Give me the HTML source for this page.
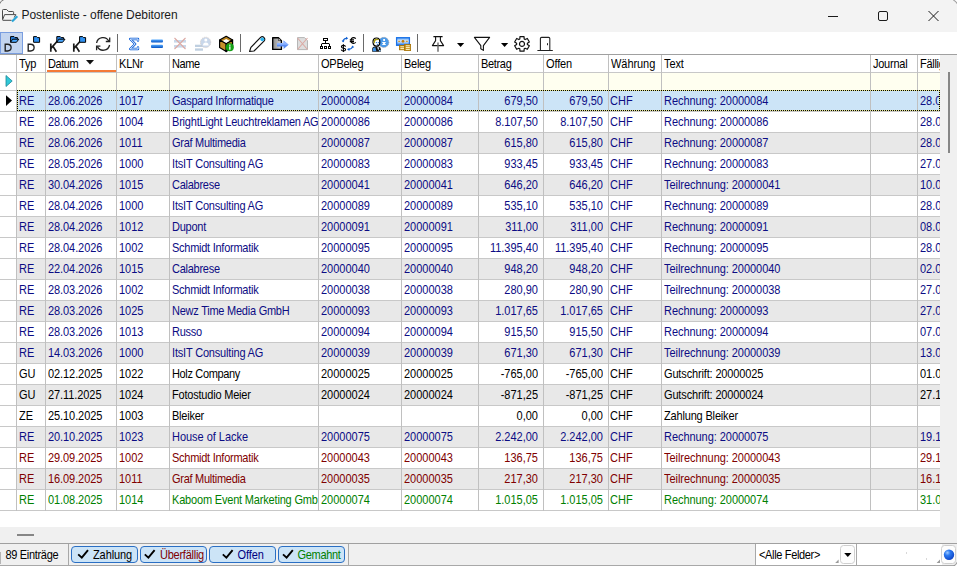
<!DOCTYPE html>
<html><head><meta charset="utf-8"><title>Postenliste - offene Debitoren</title>
<style>
*{box-sizing:border-box;margin:0;padding:0}
html,body{width:957px;height:566px;overflow:hidden;background:#f0f0f0}
body{font-family:"Liberation Sans",sans-serif;font-size:11px;color:#000;position:relative}
.abs{position:absolute}
#title{position:absolute;left:0;top:0;width:957px;height:32px;background:#f3f3f3}
#title .t{position:absolute;left:21.5px;top:7.5px;font-size:12px;color:#1b1b1b;letter-spacing:-0.06px;white-space:nowrap}
#tb{position:absolute;left:0;top:32px;width:957px;height:22px;background:#fff}
#grid{position:absolute;left:0;top:0;width:940px;height:527px;overflow:hidden}
#gridbg{position:absolute;left:0;top:54px;width:940px;height:473px;background:#fff}
#topline{position:absolute;left:0;top:54px;width:957px;height:1px;background:#a0a0a0}
#filter{position:absolute;left:17px;top:73px;width:923px;height:17px;background:#fffff0}
.row{position:absolute;left:17px;width:923px;height:20px}
.row .c{top:0;height:20px;line-height:20px;margin-left:-17px}
.row.alt{background:#e8e8e8}.row.wh{background:#fff}.row.sel{background:#cce4f7}
.c{position:absolute;white-space:nowrap;overflow:hidden;padding-left:2px}
.hdr .c{top:55px;height:17px;line-height:18px;color:#000;text-align:left;padding-left:2px}
.c-num{text-align:right;padding-right:5px;padding-left:0}
.c-w{padding-left:1px}.hdr .c-w{padding-left:2px}.c-name{letter-spacing:-0.24px}.c-dat{letter-spacing:-0.08px}.c-text{letter-spacing:-0.05px}
.t-b{color:#0c0c84}.t-k{color:#000}.t-r{color:#800000}.t-g{color:#008000}
.vl{position:absolute;top:55px;width:1px;height:456px;background:#c0c0c0}
.hl{position:absolute;left:0;width:940px;height:1px;background:#c8c8c8}
#focus{position:absolute;left:17px;top:90px;width:923px;height:21px;border:1px dotted #000;pointer-events:none}
#focus0{position:absolute;left:17px;top:90px;width:923px;height:21px;border:1px solid #e6e68a}
#vsb{position:absolute;left:940px;top:55px;width:17px;height:472px;background:#f0f0f0}
#vthumb{position:absolute;left:948px;top:72px;width:2px;height:81px;background:#868686}
#hthumb{position:absolute;left:17px;top:534px;width:17px;height:2px;background:#868686}
#status{position:absolute;left:0;top:543px;width:957px;height:23px;background:#f0f0f0;border-top:1px solid #a0a0a0}
.btn{position:absolute;top:546px;height:17px;width:67px;border:1px solid #2a6fc4;border-radius:4px;background:#cce4f7;line-height:15px;text-align:center;white-space:nowrap}
.bt{top:548px;white-space:nowrap;letter-spacing:-0.2px}
.st{transform:scaleY(1.125);transform-origin:0 2px;white-space:nowrap}
.s{display:inline-block;transform:scaleY(1.125);transform-origin:0 13.8px;line-height:20px;vertical-align:top}
.hdr .s{line-height:18px;transform-origin:0 12.8px}
</style></head><body>
<div id="title">
<div class="t">Postenliste - offene Debitoren</div>
</div>
<div id="tb"></div>
<div id="gridbg"></div>
<div id="grid">
<div id="filter"></div>
<div class="hdr"><div class="c c-typ " style="left:17px;width:28px"><span class="s"><span style="letter-spacing:-0.14px">Typ</span></span></div><div class="c c-dat " style="left:46px;width:70px"><span class="s"><span style="letter-spacing:-0.44px">Datum</span></span></div><div class="c c-kl " style="left:117px;width:52px"><span class="s"><span style="letter-spacing:-0.19px">KLNr</span></span></div><div class="c c-name " style="left:170px;width:148px"><span class="s"><span style="letter-spacing:-0.43px">Name</span></span></div><div class="c c-op " style="left:319px;width:82px"><span class="s"><span style="letter-spacing:-0.25px">OPBeleg</span></span></div><div class="c c-bel " style="left:402px;width:76px"><span class="s"><span style="letter-spacing:-0.27px">Beleg</span></span></div><div class="c c-num " style="left:479px;width:64px"><span class="s"><span style="letter-spacing:-0.33px">Betrag</span></span></div><div class="c c-num " style="left:544px;width:64px"><span class="s"><span style="letter-spacing:-0.14px">Offen</span></span></div><div class="c c-w " style="left:609px;width:52px"><span class="s"><span style="letter-spacing:-0.06px">Währung</span></span></div><div class="c c-text " style="left:662px;width:208px"><span class="s"><span style="letter-spacing:-0.12px">Text</span></span></div><div class="c c-j " style="left:871px;width:46px"><span class="s"><span style="letter-spacing:-0.25px">Journal</span></span></div><div class="c c-f " style="left:918px;width:22px"><span class="s"><span style="letter-spacing:-0.3px">Fällig</span></span></div></div>
<div class="row sel t-b" style="top:91px"><div class="c c-typ " style="left:17px;width:28px"><span class="s">RE</span></div><div class="c c-dat " style="left:46px;width:70px"><span class="s">28.06.2026</span></div><div class="c c-kl " style="left:117px;width:52px"><span class="s">1017</span></div><div class="c c-name " style="left:170px;width:148px"><span class="s"><span style="letter-spacing:-0.24px">Gaspard Informatique</span></span></div><div class="c c-op " style="left:319px;width:82px"><span class="s">20000084</span></div><div class="c c-bel " style="left:402px;width:76px"><span class="s">20000084</span></div><div class="c c-num " style="left:479px;width:64px"><span class="s">679,50</span></div><div class="c c-num " style="left:544px;width:64px"><span class="s">679,50</span></div><div class="c c-w " style="left:609px;width:52px"><span class="s">CHF</span></div><div class="c c-text " style="left:662px;width:208px"><span class="s">Rechnung: 20000084</span></div><div class="c c-j " style="left:871px;width:46px"></div><div class="c c-f " style="left:918px;width:22px"><span class="s">28.0</span></div></div>
<div class="row wh t-b" style="top:112px"><div class="c c-typ " style="left:17px;width:28px"><span class="s">RE</span></div><div class="c c-dat " style="left:46px;width:70px"><span class="s">28.06.2026</span></div><div class="c c-kl " style="left:117px;width:52px"><span class="s">1004</span></div><div class="c c-name " style="left:170px;width:148px"><span class="s"><span style="letter-spacing:-0.2px">BrightLight Leuchtreklamen AG</span></span></div><div class="c c-op " style="left:319px;width:82px"><span class="s">20000086</span></div><div class="c c-bel " style="left:402px;width:76px"><span class="s">20000086</span></div><div class="c c-num " style="left:479px;width:64px"><span class="s">8.107,50</span></div><div class="c c-num " style="left:544px;width:64px"><span class="s">8.107,50</span></div><div class="c c-w " style="left:609px;width:52px"><span class="s">CHF</span></div><div class="c c-text " style="left:662px;width:208px"><span class="s">Rechnung: 20000086</span></div><div class="c c-j " style="left:871px;width:46px"></div><div class="c c-f " style="left:918px;width:22px"><span class="s">28.0</span></div></div>
<div class="row alt t-b" style="top:133px"><div class="c c-typ " style="left:17px;width:28px"><span class="s">RE</span></div><div class="c c-dat " style="left:46px;width:70px"><span class="s">28.06.2026</span></div><div class="c c-kl " style="left:117px;width:52px"><span class="s">1011</span></div><div class="c c-name " style="left:170px;width:148px"><span class="s"><span style="letter-spacing:-0.27px">Graf Multimedia</span></span></div><div class="c c-op " style="left:319px;width:82px"><span class="s">20000087</span></div><div class="c c-bel " style="left:402px;width:76px"><span class="s">20000087</span></div><div class="c c-num " style="left:479px;width:64px"><span class="s">615,80</span></div><div class="c c-num " style="left:544px;width:64px"><span class="s">615,80</span></div><div class="c c-w " style="left:609px;width:52px"><span class="s">CHF</span></div><div class="c c-text " style="left:662px;width:208px"><span class="s">Rechnung: 20000087</span></div><div class="c c-j " style="left:871px;width:46px"></div><div class="c c-f " style="left:918px;width:22px"><span class="s">28.0</span></div></div>
<div class="row wh t-b" style="top:154px"><div class="c c-typ " style="left:17px;width:28px"><span class="s">RE</span></div><div class="c c-dat " style="left:46px;width:70px"><span class="s">28.05.2026</span></div><div class="c c-kl " style="left:117px;width:52px"><span class="s">1000</span></div><div class="c c-name " style="left:170px;width:148px"><span class="s"><span style="letter-spacing:-0.18px">ItsIT Consulting AG</span></span></div><div class="c c-op " style="left:319px;width:82px"><span class="s">20000083</span></div><div class="c c-bel " style="left:402px;width:76px"><span class="s">20000083</span></div><div class="c c-num " style="left:479px;width:64px"><span class="s">933,45</span></div><div class="c c-num " style="left:544px;width:64px"><span class="s">933,45</span></div><div class="c c-w " style="left:609px;width:52px"><span class="s">CHF</span></div><div class="c c-text " style="left:662px;width:208px"><span class="s">Rechnung: 20000083</span></div><div class="c c-j " style="left:871px;width:46px"></div><div class="c c-f " style="left:918px;width:22px"><span class="s">27.0</span></div></div>
<div class="row alt t-b" style="top:175px"><div class="c c-typ " style="left:17px;width:28px"><span class="s">RE</span></div><div class="c c-dat " style="left:46px;width:70px"><span class="s">30.04.2026</span></div><div class="c c-kl " style="left:117px;width:52px"><span class="s">1015</span></div><div class="c c-name " style="left:170px;width:148px"><span class="s"><span style="letter-spacing:-0.26px">Calabrese</span></span></div><div class="c c-op " style="left:319px;width:82px"><span class="s">20000041</span></div><div class="c c-bel " style="left:402px;width:76px"><span class="s">20000041</span></div><div class="c c-num " style="left:479px;width:64px"><span class="s">646,20</span></div><div class="c c-num " style="left:544px;width:64px"><span class="s">646,20</span></div><div class="c c-w " style="left:609px;width:52px"><span class="s">CHF</span></div><div class="c c-text " style="left:662px;width:208px"><span class="s">Teilrechnung: 20000041</span></div><div class="c c-j " style="left:871px;width:46px"></div><div class="c c-f " style="left:918px;width:22px"><span class="s">10.0</span></div></div>
<div class="row wh t-b" style="top:196px"><div class="c c-typ " style="left:17px;width:28px"><span class="s">RE</span></div><div class="c c-dat " style="left:46px;width:70px"><span class="s">28.04.2026</span></div><div class="c c-kl " style="left:117px;width:52px"><span class="s">1000</span></div><div class="c c-name " style="left:170px;width:148px"><span class="s"><span style="letter-spacing:-0.18px">ItsIT Consulting AG</span></span></div><div class="c c-op " style="left:319px;width:82px"><span class="s">20000089</span></div><div class="c c-bel " style="left:402px;width:76px"><span class="s">20000089</span></div><div class="c c-num " style="left:479px;width:64px"><span class="s">535,10</span></div><div class="c c-num " style="left:544px;width:64px"><span class="s">535,10</span></div><div class="c c-w " style="left:609px;width:52px"><span class="s">CHF</span></div><div class="c c-text " style="left:662px;width:208px"><span class="s">Rechnung: 20000089</span></div><div class="c c-j " style="left:871px;width:46px"></div><div class="c c-f " style="left:918px;width:22px"><span class="s">28.0</span></div></div>
<div class="row alt t-b" style="top:217px"><div class="c c-typ " style="left:17px;width:28px"><span class="s">RE</span></div><div class="c c-dat " style="left:46px;width:70px"><span class="s">28.04.2026</span></div><div class="c c-kl " style="left:117px;width:52px"><span class="s">1012</span></div><div class="c c-name " style="left:170px;width:148px"><span class="s">Dupont</span></div><div class="c c-op " style="left:319px;width:82px"><span class="s">20000091</span></div><div class="c c-bel " style="left:402px;width:76px"><span class="s">20000091</span></div><div class="c c-num " style="left:479px;width:64px"><span class="s">311,00</span></div><div class="c c-num " style="left:544px;width:64px"><span class="s">311,00</span></div><div class="c c-w " style="left:609px;width:52px"><span class="s">CHF</span></div><div class="c c-text " style="left:662px;width:208px"><span class="s">Rechnung: 20000091</span></div><div class="c c-j " style="left:871px;width:46px"></div><div class="c c-f " style="left:918px;width:22px"><span class="s">08.0</span></div></div>
<div class="row wh t-b" style="top:238px"><div class="c c-typ " style="left:17px;width:28px"><span class="s">RE</span></div><div class="c c-dat " style="left:46px;width:70px"><span class="s">28.04.2026</span></div><div class="c c-kl " style="left:117px;width:52px"><span class="s">1002</span></div><div class="c c-name " style="left:170px;width:148px"><span class="s"><span style="letter-spacing:-0.26px">Schmidt Informatik</span></span></div><div class="c c-op " style="left:319px;width:82px"><span class="s">20000095</span></div><div class="c c-bel " style="left:402px;width:76px"><span class="s">20000095</span></div><div class="c c-num " style="left:479px;width:64px"><span class="s">11.395,40</span></div><div class="c c-num " style="left:544px;width:64px"><span class="s">11.395,40</span></div><div class="c c-w " style="left:609px;width:52px"><span class="s">CHF</span></div><div class="c c-text " style="left:662px;width:208px"><span class="s">Rechnung: 20000095</span></div><div class="c c-j " style="left:871px;width:46px"></div><div class="c c-f " style="left:918px;width:22px"><span class="s">28.0</span></div></div>
<div class="row alt t-b" style="top:259px"><div class="c c-typ " style="left:17px;width:28px"><span class="s">RE</span></div><div class="c c-dat " style="left:46px;width:70px"><span class="s">22.04.2026</span></div><div class="c c-kl " style="left:117px;width:52px"><span class="s">1015</span></div><div class="c c-name " style="left:170px;width:148px"><span class="s"><span style="letter-spacing:-0.26px">Calabrese</span></span></div><div class="c c-op " style="left:319px;width:82px"><span class="s">20000040</span></div><div class="c c-bel " style="left:402px;width:76px"><span class="s">20000040</span></div><div class="c c-num " style="left:479px;width:64px"><span class="s">948,20</span></div><div class="c c-num " style="left:544px;width:64px"><span class="s">948,20</span></div><div class="c c-w " style="left:609px;width:52px"><span class="s">CHF</span></div><div class="c c-text " style="left:662px;width:208px"><span class="s">Teilrechnung: 20000040</span></div><div class="c c-j " style="left:871px;width:46px"></div><div class="c c-f " style="left:918px;width:22px"><span class="s">02.0</span></div></div>
<div class="row wh t-b" style="top:280px"><div class="c c-typ " style="left:17px;width:28px"><span class="s">RE</span></div><div class="c c-dat " style="left:46px;width:70px"><span class="s">28.03.2026</span></div><div class="c c-kl " style="left:117px;width:52px"><span class="s">1002</span></div><div class="c c-name " style="left:170px;width:148px"><span class="s"><span style="letter-spacing:-0.26px">Schmidt Informatik</span></span></div><div class="c c-op " style="left:319px;width:82px"><span class="s">20000038</span></div><div class="c c-bel " style="left:402px;width:76px"><span class="s">20000038</span></div><div class="c c-num " style="left:479px;width:64px"><span class="s">280,90</span></div><div class="c c-num " style="left:544px;width:64px"><span class="s">280,90</span></div><div class="c c-w " style="left:609px;width:52px"><span class="s">CHF</span></div><div class="c c-text " style="left:662px;width:208px"><span class="s">Teilrechnung: 20000038</span></div><div class="c c-j " style="left:871px;width:46px"></div><div class="c c-f " style="left:918px;width:22px"><span class="s">27.0</span></div></div>
<div class="row alt t-b" style="top:301px"><div class="c c-typ " style="left:17px;width:28px"><span class="s">RE</span></div><div class="c c-dat " style="left:46px;width:70px"><span class="s">28.03.2026</span></div><div class="c c-kl " style="left:117px;width:52px"><span class="s">1025</span></div><div class="c c-name " style="left:170px;width:148px"><span class="s">Newz Time Media GmbH</span></div><div class="c c-op " style="left:319px;width:82px"><span class="s">20000093</span></div><div class="c c-bel " style="left:402px;width:76px"><span class="s">20000093</span></div><div class="c c-num " style="left:479px;width:64px"><span class="s">1.017,65</span></div><div class="c c-num " style="left:544px;width:64px"><span class="s">1.017,65</span></div><div class="c c-w " style="left:609px;width:52px"><span class="s">CHF</span></div><div class="c c-text " style="left:662px;width:208px"><span class="s">Rechnung: 20000093</span></div><div class="c c-j " style="left:871px;width:46px"></div><div class="c c-f " style="left:918px;width:22px"><span class="s">27.0</span></div></div>
<div class="row wh t-b" style="top:322px"><div class="c c-typ " style="left:17px;width:28px"><span class="s">RE</span></div><div class="c c-dat " style="left:46px;width:70px"><span class="s">28.03.2026</span></div><div class="c c-kl " style="left:117px;width:52px"><span class="s">1013</span></div><div class="c c-name " style="left:170px;width:148px"><span class="s">Russo</span></div><div class="c c-op " style="left:319px;width:82px"><span class="s">20000094</span></div><div class="c c-bel " style="left:402px;width:76px"><span class="s">20000094</span></div><div class="c c-num " style="left:479px;width:64px"><span class="s">915,50</span></div><div class="c c-num " style="left:544px;width:64px"><span class="s">915,50</span></div><div class="c c-w " style="left:609px;width:52px"><span class="s">CHF</span></div><div class="c c-text " style="left:662px;width:208px"><span class="s">Rechnung: 20000094</span></div><div class="c c-j " style="left:871px;width:46px"></div><div class="c c-f " style="left:918px;width:22px"><span class="s">07.0</span></div></div>
<div class="row alt t-b" style="top:343px"><div class="c c-typ " style="left:17px;width:28px"><span class="s">RE</span></div><div class="c c-dat " style="left:46px;width:70px"><span class="s">14.03.2026</span></div><div class="c c-kl " style="left:117px;width:52px"><span class="s">1000</span></div><div class="c c-name " style="left:170px;width:148px"><span class="s"><span style="letter-spacing:-0.18px">ItsIT Consulting AG</span></span></div><div class="c c-op " style="left:319px;width:82px"><span class="s">20000039</span></div><div class="c c-bel " style="left:402px;width:76px"><span class="s">20000039</span></div><div class="c c-num " style="left:479px;width:64px"><span class="s">671,30</span></div><div class="c c-num " style="left:544px;width:64px"><span class="s">671,30</span></div><div class="c c-w " style="left:609px;width:52px"><span class="s">CHF</span></div><div class="c c-text " style="left:662px;width:208px"><span class="s">Teilrechnung: 20000039</span></div><div class="c c-j " style="left:871px;width:46px"></div><div class="c c-f " style="left:918px;width:22px"><span class="s">13.0</span></div></div>
<div class="row wh t-k" style="top:364px"><div class="c c-typ " style="left:17px;width:28px"><span class="s">GU</span></div><div class="c c-dat " style="left:46px;width:70px"><span class="s">02.12.2025</span></div><div class="c c-kl " style="left:117px;width:52px"><span class="s">1022</span></div><div class="c c-name " style="left:170px;width:148px"><span class="s"><span style="letter-spacing:-0.35px">Holz Company</span></span></div><div class="c c-op " style="left:319px;width:82px"><span class="s">20000025</span></div><div class="c c-bel " style="left:402px;width:76px"><span class="s">20000025</span></div><div class="c c-num " style="left:479px;width:64px"><span class="s">-765,00</span></div><div class="c c-num " style="left:544px;width:64px"><span class="s">-765,00</span></div><div class="c c-w " style="left:609px;width:52px"><span class="s">CHF</span></div><div class="c c-text " style="left:662px;width:208px"><span class="s"><span style="letter-spacing:-0.15px">Gutschrift: 20000025</span></span></div><div class="c c-j " style="left:871px;width:46px"></div><div class="c c-f " style="left:918px;width:22px"><span class="s">01.0</span></div></div>
<div class="row alt t-k" style="top:385px"><div class="c c-typ " style="left:17px;width:28px"><span class="s">GU</span></div><div class="c c-dat " style="left:46px;width:70px"><span class="s">27.11.2025</span></div><div class="c c-kl " style="left:117px;width:52px"><span class="s">1024</span></div><div class="c c-name " style="left:170px;width:148px"><span class="s"><span style="letter-spacing:-0.2px">Fotostudio Meier</span></span></div><div class="c c-op " style="left:319px;width:82px"><span class="s">20000024</span></div><div class="c c-bel " style="left:402px;width:76px"><span class="s">20000024</span></div><div class="c c-num " style="left:479px;width:64px"><span class="s">-871,25</span></div><div class="c c-num " style="left:544px;width:64px"><span class="s">-871,25</span></div><div class="c c-w " style="left:609px;width:52px"><span class="s">CHF</span></div><div class="c c-text " style="left:662px;width:208px"><span class="s"><span style="letter-spacing:-0.15px">Gutschrift: 20000024</span></span></div><div class="c c-j " style="left:871px;width:46px"></div><div class="c c-f " style="left:918px;width:22px"><span class="s">27.1</span></div></div>
<div class="row wh t-k" style="top:406px"><div class="c c-typ " style="left:17px;width:28px"><span class="s">ZE</span></div><div class="c c-dat " style="left:46px;width:70px"><span class="s">25.10.2025</span></div><div class="c c-kl " style="left:117px;width:52px"><span class="s">1003</span></div><div class="c c-name " style="left:170px;width:148px"><span class="s">Bleiker</span></div><div class="c c-op " style="left:319px;width:82px"></div><div class="c c-bel " style="left:402px;width:76px"></div><div class="c c-num " style="left:479px;width:64px"><span class="s">0,00</span></div><div class="c c-num " style="left:544px;width:64px"><span class="s">0,00</span></div><div class="c c-w " style="left:609px;width:52px"><span class="s">CHF</span></div><div class="c c-text " style="left:662px;width:208px"><span class="s"><span style="letter-spacing:-0.17px">Zahlung Bleiker</span></span></div><div class="c c-j " style="left:871px;width:46px"></div><div class="c c-f " style="left:918px;width:22px"></div></div>
<div class="row alt t-b" style="top:427px"><div class="c c-typ " style="left:17px;width:28px"><span class="s">RE</span></div><div class="c c-dat " style="left:46px;width:70px"><span class="s">20.10.2025</span></div><div class="c c-kl " style="left:117px;width:52px"><span class="s">1023</span></div><div class="c c-name " style="left:170px;width:148px"><span class="s"><span style="letter-spacing:-0.03px">House of Lacke</span></span></div><div class="c c-op " style="left:319px;width:82px"><span class="s">20000075</span></div><div class="c c-bel " style="left:402px;width:76px"><span class="s">20000075</span></div><div class="c c-num " style="left:479px;width:64px"><span class="s">2.242,00</span></div><div class="c c-num " style="left:544px;width:64px"><span class="s">2.242,00</span></div><div class="c c-w " style="left:609px;width:52px"><span class="s">CHF</span></div><div class="c c-text " style="left:662px;width:208px"><span class="s">Rechnung: 20000075</span></div><div class="c c-j " style="left:871px;width:46px"></div><div class="c c-f " style="left:918px;width:22px"><span class="s">19.1</span></div></div>
<div class="row wh t-r" style="top:448px"><div class="c c-typ " style="left:17px;width:28px"><span class="s">RE</span></div><div class="c c-dat " style="left:46px;width:70px"><span class="s">29.09.2025</span></div><div class="c c-kl " style="left:117px;width:52px"><span class="s">1002</span></div><div class="c c-name " style="left:170px;width:148px"><span class="s"><span style="letter-spacing:-0.26px">Schmidt Informatik</span></span></div><div class="c c-op " style="left:319px;width:82px"><span class="s">20000043</span></div><div class="c c-bel " style="left:402px;width:76px"><span class="s">20000043</span></div><div class="c c-num " style="left:479px;width:64px"><span class="s">136,75</span></div><div class="c c-num " style="left:544px;width:64px"><span class="s">136,75</span></div><div class="c c-w " style="left:609px;width:52px"><span class="s">CHF</span></div><div class="c c-text " style="left:662px;width:208px"><span class="s">Teilrechnung: 20000043</span></div><div class="c c-j " style="left:871px;width:46px"></div><div class="c c-f " style="left:918px;width:22px"><span class="s">29.1</span></div></div>
<div class="row alt t-r" style="top:469px"><div class="c c-typ " style="left:17px;width:28px"><span class="s">RE</span></div><div class="c c-dat " style="left:46px;width:70px"><span class="s">16.09.2025</span></div><div class="c c-kl " style="left:117px;width:52px"><span class="s">1011</span></div><div class="c c-name " style="left:170px;width:148px"><span class="s"><span style="letter-spacing:-0.27px">Graf Multimedia</span></span></div><div class="c c-op " style="left:319px;width:82px"><span class="s">20000035</span></div><div class="c c-bel " style="left:402px;width:76px"><span class="s">20000035</span></div><div class="c c-num " style="left:479px;width:64px"><span class="s">217,30</span></div><div class="c c-num " style="left:544px;width:64px"><span class="s">217,30</span></div><div class="c c-w " style="left:609px;width:52px"><span class="s">CHF</span></div><div class="c c-text " style="left:662px;width:208px"><span class="s">Teilrechnung: 20000035</span></div><div class="c c-j " style="left:871px;width:46px"></div><div class="c c-f " style="left:918px;width:22px"><span class="s">16.1</span></div></div>
<div class="row wh t-g" style="top:490px"><div class="c c-typ " style="left:17px;width:28px"><span class="s">RE</span></div><div class="c c-dat " style="left:46px;width:70px"><span class="s">01.08.2025</span></div><div class="c c-kl " style="left:117px;width:52px"><span class="s">1014</span></div><div class="c c-name " style="left:170px;width:148px"><span class="s"><span style="letter-spacing:-0.18px">Kaboom Event Marketing GmbH</span></span></div><div class="c c-op " style="left:319px;width:82px"><span class="s">20000074</span></div><div class="c c-bel " style="left:402px;width:76px"><span class="s">20000074</span></div><div class="c c-num " style="left:479px;width:64px"><span class="s">1.015,05</span></div><div class="c c-num " style="left:544px;width:64px"><span class="s">1.015,05</span></div><div class="c c-w " style="left:609px;width:52px"><span class="s">CHF</span></div><div class="c c-text " style="left:662px;width:208px"><span class="s">Rechnung: 20000074</span></div><div class="c c-j " style="left:871px;width:46px"></div><div class="c c-f " style="left:918px;width:22px"><span class="s">31.0</span></div></div>
<div class="hl" style="top:72px"></div><div class="hl" style="top:90px"></div><div class="hl" style="top:111px"></div><div class="hl" style="top:132px"></div><div class="hl" style="top:153px"></div><div class="hl" style="top:174px"></div><div class="hl" style="top:195px"></div><div class="hl" style="top:216px"></div><div class="hl" style="top:237px"></div><div class="hl" style="top:258px"></div><div class="hl" style="top:279px"></div><div class="hl" style="top:300px"></div><div class="hl" style="top:321px"></div><div class="hl" style="top:342px"></div><div class="hl" style="top:363px"></div><div class="hl" style="top:384px"></div><div class="hl" style="top:405px"></div><div class="hl" style="top:426px"></div><div class="hl" style="top:447px"></div><div class="hl" style="top:468px"></div><div class="hl" style="top:489px"></div><div class="hl" style="top:510px"></div>
<div class="vl" style="left:16px"></div><div class="vl" style="left:45px"></div><div class="vl" style="left:116px"></div><div class="vl" style="left:169px"></div><div class="vl" style="left:318px"></div><div class="vl" style="left:401px"></div><div class="vl" style="left:478px"></div><div class="vl" style="left:543px"></div><div class="vl" style="left:608px"></div><div class="vl" style="left:661px"></div><div class="vl" style="left:870px"></div><div class="vl" style="left:917px"></div>
<div id="focus0"></div><div id="focus"></div>
</div>
<div id="topline"></div>
<div id="vsb"></div><div id="vthumb"></div><div id="hthumb"></div>
<div id="status"></div>
<div class="abs st" style="left:5.5px;top:548px;letter-spacing:-0.32px">89 Einträge</div>
<div class="btn" style="left:71px"></div>
<div class="btn" style="left:140px"></div>
<div class="btn" style="left:209px"></div>
<div class="btn" style="left:278px"></div>
<div class="abs bt st" id="b1" style="left:93px;letter-spacing:-0.1px;color:#000">Zahlung</div>
<div class="abs bt st" id="b2" style="left:160px;letter-spacing:-0.25px;color:#800000">Überfällig</div>
<div class="abs bt st" id="b3" style="left:237.5px;letter-spacing:-0.06px;color:#000080">Offen</div>
<div class="abs bt st" id="b4" style="left:297.5px;letter-spacing:-0.32px;color:#008000">Gemahnt</div>
<div class="abs" style="left:47px;top:70px;width:69px;height:2px;background:#f47a36"></div>
<div class="abs" style="left:68px;top:544px;width:1px;height:21px;background:#a8a8a8"></div>
<div class="abs" style="left:348px;top:544px;width:1px;height:21px;background:#a8a8a8"></div>
<div class="abs" style="left:756px;top:544px;width:100px;height:21px;background:#fff"></div>
<div class="abs" style="left:857px;top:544px;width:85px;height:21px;background:#fff"></div>
<div class="abs" style="left:856px;top:544px;width:1px;height:21px;background:#a8a8a8"></div>
<div class="abs" style="left:755px;top:544px;width:1px;height:21px;background:#a8a8a8"></div>
<div class="abs" style="left:0;top:565px;width:957px;height:1px;background:#a8a8a8"></div>
<div class="abs st" style="left:759px;top:548px;letter-spacing:-0.34px">&lt;Alle Felder&gt;</div>
<div class="abs" style="left:0;top:552px;width:1px;height:12px;background:#b4b4b4"></div>
<div class="abs" style="left:906px;top:552px;width:1px;height:2px;background:#d8d8d8"></div><div class="abs" style="left:926px;top:558px;width:1px;height:2px;background:#d8d8d8"></div>
<svg class="abs" style="left:0;top:0" width="957" height="566" viewBox="0 0 957 566" font-family="Liberation Sans, sans-serif">
<defs>
<linearGradient id="gb" x1="0" y1="0" x2="0" y2="1"><stop offset="0" stop-color="#55aaff"/><stop offset="1" stop-color="#0a55c4"/></linearGradient>
<linearGradient id="gdoc" x1="0" y1="0" x2="1" y2="0"><stop offset="0" stop-color="#8c8c8c"/><stop offset="1" stop-color="#d8d8d8"/></linearGradient>
<linearGradient id="gnote" x1="0" y1="0" x2="0" y2="1"><stop offset="0" stop-color="#4a98f0"/><stop offset="0.45" stop-color="#e8f2ff"/><stop offset="1" stop-color="#1a74e8"/></linearGradient>
<radialGradient id="gball" cx="0.35" cy="0.3" r="0.8"><stop offset="0" stop-color="#9cc8ff"/><stop offset="0.35" stop-color="#2a78f0"/><stop offset="1" stop-color="#0a3cc0"/></radialGradient>
</defs>
<!-- window corners -->
<path d="M953 0 H957 V4 Q956.6 0.4 953 0 Z" fill="#fff"/>
<path d="M953.4 0.3 Q956.4 0.8 956.8 3.6" fill="none" stroke="#8c8c8c" stroke-width="1"/>
<path d="M0 3.6 Q0.6 0.6 3.6 0" fill="none" stroke="#7c7c7c" stroke-width="1"/>
<path d="M957 562 V566 H953 Q956.6 565.6 957 562 Z" fill="#fff"/>
<path d="M956.8 562.4 Q956.4 565.4 953.4 565.8" fill="none" stroke="#8c8c8c" stroke-width="1"/>
<!-- title icon -->
<g fill="none" stroke="#4a4a4a" stroke-width="1">
<path d="M2.5 19.5 V10.3 Q2.5 9.5 3.3 9.5 H6.6 L8.6 11.5 H12.8 Q13.6 11.5 13.6 12.3 V14"/>
<path d="M2.6 19.8 L4.6 14.6 H15.8 L14.2 17.5 M2.6 20.3 H11.5"/>
</g>
<path d="M12 21.6 L17.3 16.2" stroke="#2aa6d8" stroke-width="2.2"/>
<!-- window controls -->
<g fill="none" stroke="#1a1a1a" stroke-width="1">
<path d="M828 16.5 H838"/>
<rect x="878.5" y="11.5" width="9" height="9" rx="1.5"/>
<path d="M928.5 11 L938.5 21 M938.5 11 L928.5 21"/>
</g>
<!-- selected toolbar button -->
<rect x="0.5" y="32.5" width="22" height="21" fill="#c4d5ef" stroke="#7a9ee0"/>
<!-- icon1 D open folder -->
<path d="M5.2 44.2 V51 H7.6 Q11.1 51 11.1 47.6 Q11.1 44.2 7.6 44.2 Z" fill="none" stroke="#222" stroke-width="1.35"/>
<path d="M10.6 42.3 V36.6 H14 L15 37.6 H17.4 V39.2" fill="#2a86e8" stroke="#000" stroke-width="1"/>
<path d="M10.6 42.3 L12.6 39.2 H18.8 L16.4 42.3 Z" fill="#49a8ff" stroke="#000" stroke-width="1"/>
<!-- icon2 D closed folder -->
<path d="M28.2 44.2 V51 H30.6 Q34.1 51 34.1 47.6 Q34.1 44.2 30.6 44.2 Z" fill="none" stroke="#222" stroke-width="1.35"/>
<path d="M33.6 42.3 V36.6 H36.6 L37.6 37.6 H39.6 V42.3 Z" fill="#2f90f0" stroke="#000" stroke-width="1"/>
<!-- icon3 K open folder -->
<g stroke="#1a1a1a" stroke-width="1.7" fill="none"><path d="M50.8 43.4 V51.8 M51 48.4 L57.6 40.8 M53 46.4 L56.4 51.8"/></g>
<path d="M56.8 42.3 V36.6 H60.2 L61.2 37.6 H63.6 V39.2" fill="#2a86e8" stroke="#000" stroke-width="1"/>
<path d="M56.8 42.3 L58.8 39.2 H65 L62.6 42.3 Z" fill="#49a8ff" stroke="#000" stroke-width="1"/>
<!-- icon4 K closed folder -->
<g stroke="#1a1a1a" stroke-width="1.7" fill="none"><path d="M73.8 43.4 V51.8 M74 48.4 L80.6 40.8 M76 46.4 L79.4 51.8"/></g>
<path d="M79.6 42.3 V36.6 H82.6 L83.6 37.6 H85.6 V42.3 Z" fill="#2f90f0" stroke="#000" stroke-width="1"/>
<!-- icon5 refresh -->
<g fill="none" stroke="#222" stroke-width="1.3">
<path d="M96.6 43 A6.5 6.5 0 0 1 108.8 41.2"/>
<path d="M105.8 41.5 H109.7 V37.6"/>
<path d="M109.6 45 A6.5 6.5 0 0 1 97.4 46.6"/>
<path d="M100.4 46.2 H96.6 V50.2"/>
</g>
<!-- separators -->
<g stroke="#6a6a6a" stroke-width="1">
<path d="M117.5 34 V52 M240.5 34 V52 M363.5 34 V52 M417.5 34 V52"/>
</g>
<!-- sigma -->
<path d="M138 40.6 V39 H130.2 L135.2 44 L130.2 49 H138 V47.4" fill="none" stroke="#0f5fd6" stroke-width="2.4" stroke-linejoin="round" stroke-linecap="round"/>
<path d="M138 40.6 V39 H130.2 L135.2 44 L130.2 49 H138 V47.4" fill="none" stroke="#e4f0ff" stroke-width="1" stroke-linejoin="round" stroke-linecap="round"/>
<!-- equals -->
<rect x="151" y="39.4" width="12" height="3.2" rx="1" fill="url(#gb)"/>
<rect x="151" y="44.7" width="12" height="3.2" rx="1" fill="url(#gb)"/>
<!-- faded X equals -->
<rect x="174" y="40" width="12" height="2.6" fill="#c8d8ea"/>
<rect x="174" y="45" width="12" height="2.6" fill="#c8d8ea"/>
<path d="M174.5 38 L185.5 49 M185.5 38 L174.5 49" stroke="#dba9a3" stroke-width="1.1"/>
<!-- faded equals person -->
<rect x="195" y="44.7" width="8" height="2.3" fill="#bfcfe0"/>
<rect x="195" y="48.4" width="8" height="2.3" fill="#bfcfe0"/>
<circle cx="205.6" cy="42.4" r="5.2" fill="#c9d7ea" stroke="#cfc3bd" stroke-width="0.8" stroke-dasharray="1 1"/>
<circle cx="205.8" cy="40" r="1.5" fill="#fff"/>
<path d="M203 45.6 Q203 42.4 205.8 42.4 Q208.6 42.4 208.6 45.6 Z" fill="#fff"/>
<!-- box info -->
<path d="M219.6 40 L226.2 36.3 L232.6 40 L226.2 43.8 Z" fill="#b8821c" stroke="#000" stroke-width="1.2" stroke-linejoin="round"/>
<path d="M222.4 41 L226.2 39 L230 41 L226.2 43.2 Z" fill="#fff"/>
<path d="M219.6 40 L226.2 43.8 V51.6 L219.6 47.6 Z" fill="#c8902a" stroke="#000" stroke-width="1.2" stroke-linejoin="round"/>
<path d="M226.2 43.8 L232.6 40 V47.6 L226.2 51.6 Z" fill="#a8781c" stroke="#000" stroke-width="1.2" stroke-linejoin="round"/>
<circle cx="229.8" cy="47.3" r="4" fill="#14a014"/>
<rect x="229.2" y="46.4" width="1.3" height="3.3" fill="#fff"/><rect x="229.2" y="44.6" width="1.3" height="1.2" fill="#fff"/>
<!-- pencil -->
<path d="M249.6 51.4 L250.9 47.4 L260.6 37.4 Q262.4 36 264 37.6 Q265.4 39.2 264.2 40.8 L254 51 Z" fill="#fff" stroke="#111" stroke-width="1.2" stroke-linejoin="round"/>
<circle cx="262.3" cy="39.3" r="1.9" fill="#2eb6f0"/>
<!-- doc arrow -->
<path d="M272.7 37.7 H278.4 L281.4 40.7 V49.4 H272.7 Z" fill="url(#gdoc)" stroke="#000" stroke-width="1.4" stroke-linejoin="round"/>
<path d="M278.4 37.9 V40.6 H281.2 Z" fill="#fff" stroke="#000" stroke-width="0.6"/>
<path d="M277 43 H283.6 V40.6 L288.6 44.8 L283.6 49 V46.6 H277 Z" fill="#5b8cf2"/>
<path d="M277 43 H283.6 V40.6 L288.6 44.8 H277 Z" fill="#8fb4ff"/>
<!-- faded doc X -->
<path d="M297.5 37.6 H304.5 L307.5 40.6 V49.6 H297.5 Z" fill="#dedede" stroke="#b6b6b6" stroke-width="1"/>
<path d="M297.5 38 L307.5 49.5 M307.5 38 L297.5 49.5" stroke="#dba9a3" stroke-width="1.1"/>
<!-- org chart -->
<g shape-rendering="crispEdges">
<rect x="323" y="38" width="5" height="3" fill="#000"/><rect x="324" y="39" width="3" height="1" fill="#fff"/>
<rect x="325" y="41" width="1" height="3" fill="#000"/>
<rect x="322" y="43" width="7" height="1" fill="#000"/>
<rect x="321" y="44" width="1" height="2" fill="#000"/><rect x="329" y="44" width="1" height="2" fill="#000"/>
<rect x="320" y="46" width="3" height="3" fill="#000"/><rect x="321" y="47" width="1" height="1" fill="#fff"/>
<rect x="324" y="46" width="3" height="3" fill="#000"/><rect x="325" y="47" width="1" height="1" fill="#fff"/>
<rect x="328" y="46" width="3" height="3" fill="#000"/><rect x="329" y="47" width="1" height="1" fill="#fff"/>
</g>
<rect x="321.3" y="43.3" width="1" height="1" fill="#000" opacity="0.6"/><rect x="328.7" y="43.3" width="1" height="1" fill="#000" opacity="0.6"/>
<!-- currency -->
<g fill="none" stroke="#000" stroke-width="1.1">
<path d="M355.8 38.6 Q354.8 37.6 353.6 37.6 Q351 37.6 351 40.6 Q351 43.4 353.6 43.4 Q354.8 43.4 355.8 42.4"/>
<path d="M349.8 39.9 H354 M349.8 41.6 H354"/>
<path d="M345.6 46.6 Q345.2 45.4 343.4 45.4 Q341.4 45.4 341.4 46.8 Q341.4 48 343.4 48.2 Q345.6 48.4 345.6 49.6 Q345.6 51 343.4 51 Q341.6 51 341.2 49.6"/>
<path d="M343.4 44.3 V52"/>
</g>
<g fill="none" stroke="#0f5fd0" stroke-width="1.2">
<path d="M343 41.6 Q343.2 38.6 346.6 38.3"/>
<path d="M347.6 49.4 Q352 49.2 352.6 46.6"/>
</g>
<g fill="#0f5fd0">
<path d="M341.6 40.6 L344.6 40.6 L343.1 42.6 Z"/><path d="M346 36.8 L348.2 38.3 L346 39.8 Z"/>
<path d="M349.4 48 L347.4 49.4 L349.4 51 Z"/><path d="M351.2 47.4 L354.2 47.4 L352.7 45.4 Z"/>
</g>
<!-- person with blue circle -->
<circle cx="383.8" cy="42.4" r="5.1" fill="#4c9ae8" stroke="#a89890" stroke-width="0.7" stroke-dasharray="0.9 0.9"/>
<rect x="383.2" y="39" width="1.8" height="2" fill="#fff"/>
<path d="M381.8 42 H386.2 L384.8 43.4 L386.2 45 H381.8 L383.2 43.4 Z" fill="#fff"/>
<path d="M372.2 51.8 V49 Q372.2 46.6 375 46.4 H378.4 Q380.8 46.6 380.8 49 V51.8 Z" fill="#111"/>
<path d="M372.8 51.2 V49 Q372.8 47.4 375.4 47.2 L376.4 51.2 Z" fill="#3a90e6"/>
<path d="M377.2 47 L378.2 50.6 L379.2 47.4 Z" fill="#dfeefc"/>
<rect x="379" y="50" width="1.6" height="1.4" fill="#8cc0f0"/>
<path d="M373 42.4 Q372.8 38 376.6 38 Q380 38 379.8 42.4 Q379.6 46.2 376.6 46.2 Q373.4 46.2 373 42.4 Z" fill="#fff" stroke="#000" stroke-width="1.2"/>
<path d="M373.7 43 Q373.2 38.8 376.4 38.8 Q378.6 38.8 379 40 Q376.4 39.6 375.4 40.8 Q374.8 41.6 374.8 43.4 Z" fill="#a89c10"/>
<circle cx="376.4" cy="42.6" r="0.7" fill="#2a78d8"/><circle cx="378.4" cy="42.6" r="0.7" fill="#2a78d8"/><circle cx="377.4" cy="44.4" r="0.6" fill="#2a78d8"/>
<!-- banknote coins -->
<rect x="396.6" y="37.7" width="12.8" height="7.6" fill="url(#gnote)" stroke="#1a72e8" stroke-width="1.3"/>
<circle cx="403" cy="41.3" r="1.4" fill="#c07c0c"/><path d="M398.2 41.3 H400.2 M405.8 41.3 H407.8" stroke="#c88a10" stroke-width="1"/>
<rect x="399.4" y="45.4" width="5.2" height="4.4" fill="#c48c14" stroke="#a87408" stroke-width="0.8"/>
<rect x="404.6" y="44.4" width="6" height="6.2" fill="#c48c14" stroke="#a87408" stroke-width="0.8"/>
<path d="M400.4 46.8 H404 M400.4 48.6 H404 M405.8 45.8 H409.8 M405.8 47.6 H409.8 M405.8 49.4 H409.8" stroke="#fff6c8" stroke-width="1"/>
<!-- pin -->
<path d="M433.4 36.6 H442.6 M435.6 36.8 V40.6 L432.4 45.6 H443.6 L440.4 40.6 V36.8" fill="none" stroke="#111" stroke-width="1.1" stroke-linejoin="round"/>
<path d="M438 42.6 V51.8" stroke="#666" stroke-width="1.4"/>
<path d="M457 43 H464.2 L460.6 47 Z" fill="#000"/>
<!-- funnel -->
<path d="M474.4 37.4 H489.6 L483.4 45.6 V50.4 L480.8 48.8 V45.6 Z" fill="none" stroke="#111" stroke-width="1.1" stroke-linejoin="round"/>
<path d="M501 43 H508.2 L504.6 47 Z" fill="#000"/>
<!-- gear -->
<g transform="translate(522 43.9)" fill="none" stroke="#111" stroke-width="1.2" stroke-linejoin="round">
<path d="M-2.20 -4.93 L-2.03 -7.32 L2.03 -7.32 L2.20 -4.93 L3.17 -4.37 L5.33 -5.42 L7.36 -1.91 L5.37 -0.56 L5.37 0.56 L7.36 1.91 L5.33 5.42 L3.17 4.37 L2.20 4.93 L2.03 7.32 L-2.03 7.32 L-2.20 4.93 L-3.17 4.37 L-5.33 5.42 L-7.36 1.91 L-5.37 0.56 L-5.37 -0.56 L-7.36 -1.91 L-5.33 -5.42 L-3.17 -4.37 Z"/>
<circle r="2.5"/>
</g>
<!-- door -->
<path d="M540.4 50.4 V38.6 Q540.4 37.4 541.6 37.4 H548.6 Q549.8 37.4 549.8 38.6 V50.4 M537.4 50.5 H552.8" fill="none" stroke="#222" stroke-width="1.1"/>
<rect x="547" y="43.2" width="1" height="2" fill="#222"/>
<!-- row indicators -->
<path d="M6 75.5 L12.2 81 L6 86.5 Z" fill="#30c8d8" stroke="#1a8898" stroke-width="0.8"/>
<path d="M6 95.2 L12 100.6 L6 106 Z" fill="#000"/>
<!-- sort arrow -->
<path d="M86 60 H94 L90 64.4 Z" fill="#111"/>
<!-- status checks -->
<g fill="none" stroke="#000" stroke-width="1.9">
<path d="M78.2 554.4 L81.8 557.6 L88 550.2"/>
<path d="M144.8 554.4 L148.4 557.6 L154.6 550.2"/>
<path d="M222.8 554.4 L226.4 557.6 L232.6 550.2"/>
<path d="M283 554.4 L286.6 557.6 L292.8 550.2"/>
</g>
<!-- combo -->
<rect x="840.5" y="545.5" width="14" height="18" rx="3" fill="#fdfdfd" stroke="#cfcfcf"/>
<path d="M844.2 553 H851.4 L847.8 557 Z" fill="#000"/>
<path d="M838.6 559.6 V563 H835.2 Z" fill="#9a9a9a"/>
<path d="M940 559.6 V563 H936.6 Z" fill="#9a9a9a"/>
<rect x="941.5" y="545.5" width="14" height="18" rx="3" fill="#fdfdfd" stroke="#cfcfcf"/>
<circle cx="949" cy="554.8" r="5.2" fill="url(#gball)"/>
</svg>

</body></html>
